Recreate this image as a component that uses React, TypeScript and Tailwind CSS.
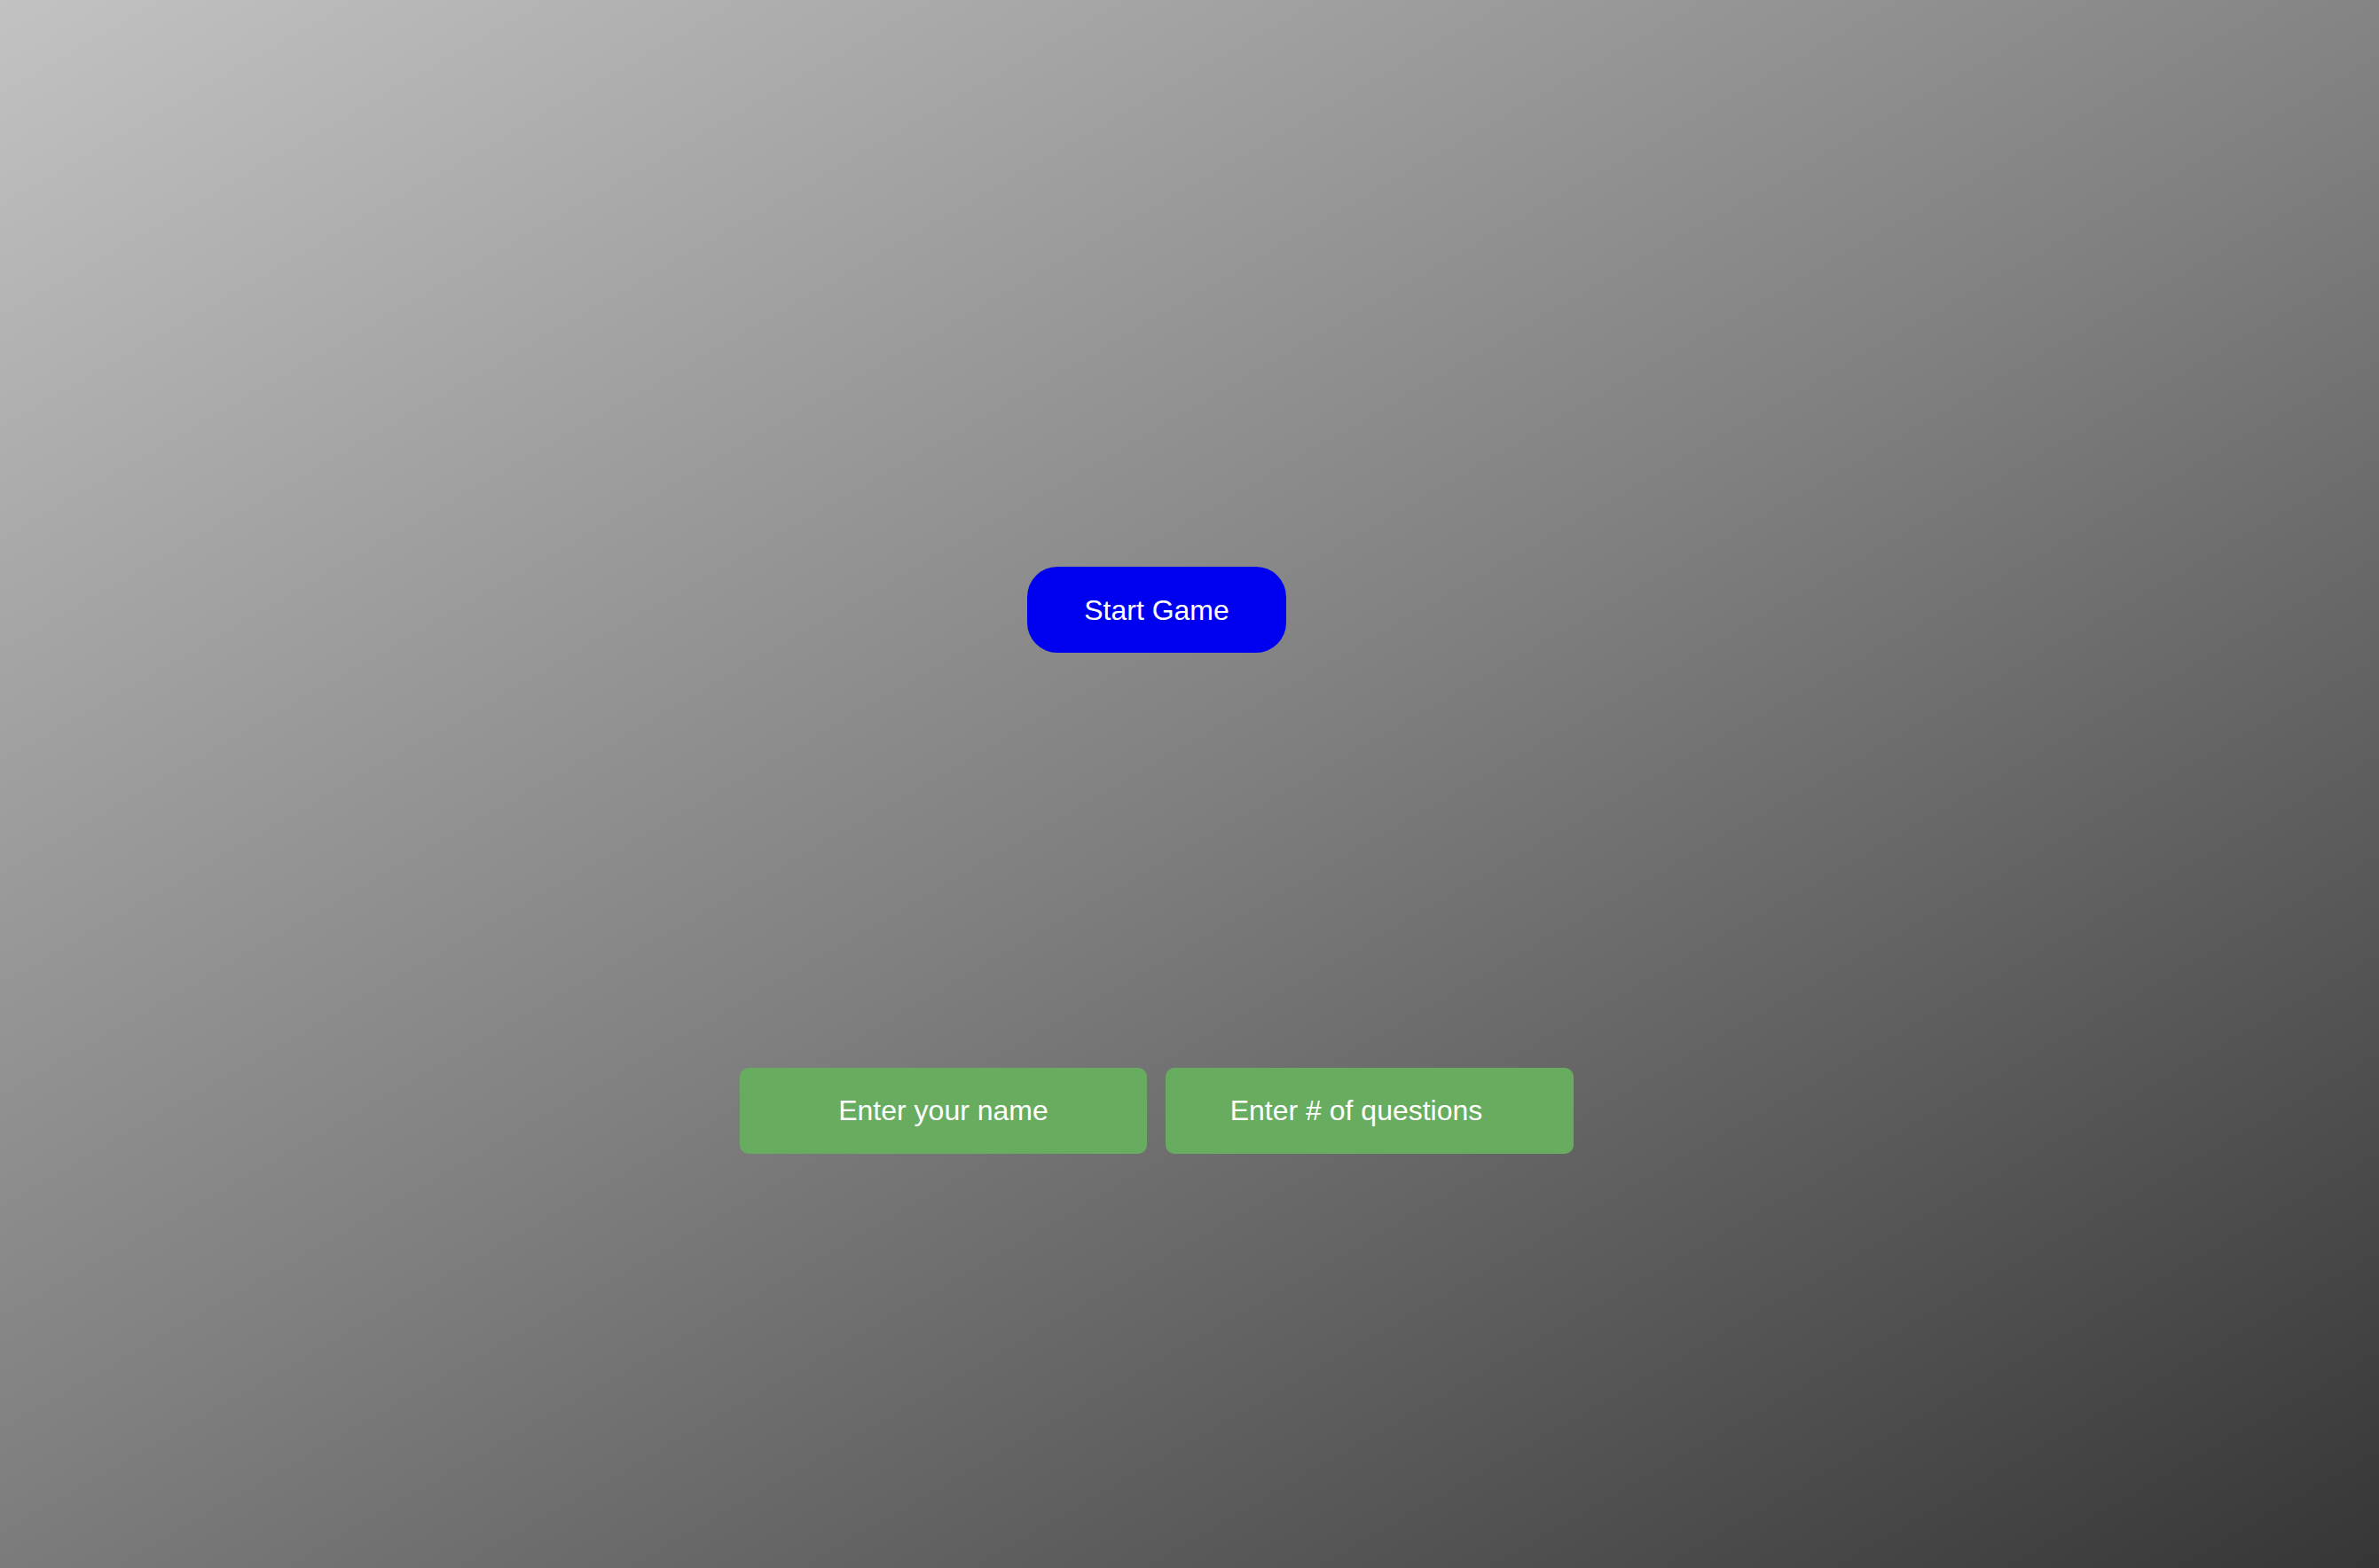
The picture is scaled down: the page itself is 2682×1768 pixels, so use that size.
export default function App() {
  return (
    <div
      className="w-[2682px] h-[1768px] bg-[linear-gradient(150deg,#c2c2c2_0%,#808080_50%,#363636_100%)] pr-[74px] flex flex-col items-center"
      style={{ fontFamily: '"Liberation Sans", Arial, sans-serif' }}
    >
      <button className="mt-[639px] w-[292px] h-[97px] rounded-[34px] bg-[#0000f0] text-white text-[32px] leading-none">
        Start Game
      </button>
      <div className="mt-[468px] flex gap-[21px]">
        <input
          type="text"
          placeholder="Enter your name"
          className="w-[459px] h-[97px] rounded-[10px] bg-[#68ad5f] text-white text-[32px] text-center placeholder:text-white outline-none"
        />
        <input
          type="text"
          placeholder="Enter # of questions"
          className="w-[460px] h-[97px] rounded-[10px] bg-[#68ad5f] text-white text-[32px] text-center pr-[30px] placeholder:text-white outline-none"
        />
      </div>
    </div>
  );
}
